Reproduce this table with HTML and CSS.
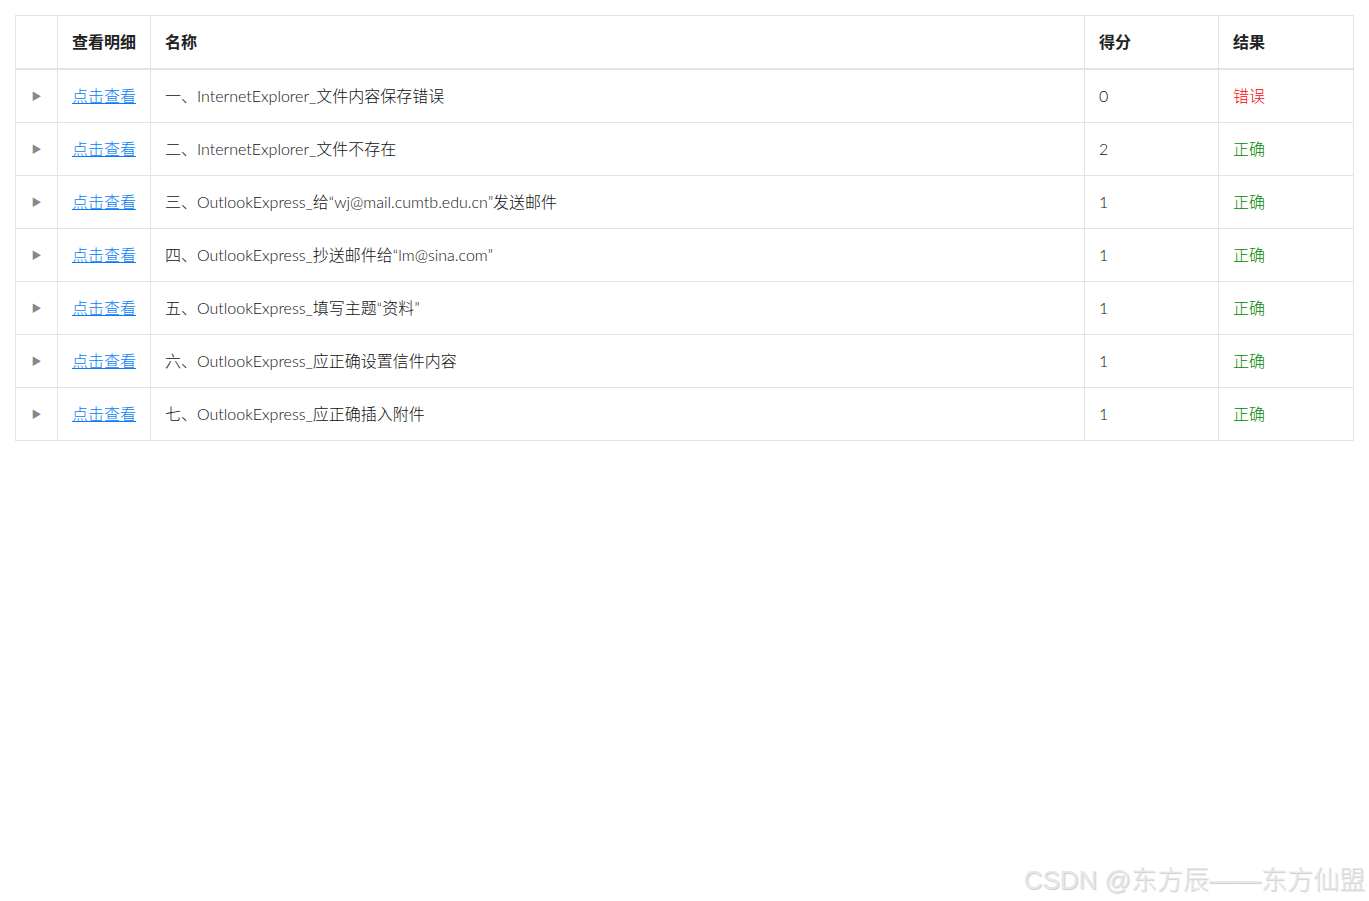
FILE: index.html
```html
<!DOCTYPE html>
<html lang="zh">
<head>
<meta charset="utf-8">
<link rel="stylesheet" href="styles.css">
</head>
<body>
<div class="wrap">
<table class="grid">
  <colgroup>
    <col class="c-exp"><col class="c-link"><col class="c-name"><col class="c-score"><col class="c-res">
  </colgroup>
  <thead>
    <tr><th></th><th>查看明细</th><th>名称</th><th>得分</th><th>结果</th></tr>
  </thead>
  <tbody>
    <tr><td class="exp">&#9654;</td><td><a href="#">点击查看</a></td><td>一、InternetExplorer_文件内容保存错误</td><td>0</td><td class="bad">错误</td></tr>
    <tr><td class="exp">&#9654;</td><td><a href="#">点击查看</a></td><td>二、InternetExplorer_文件不存在</td><td>2</td><td class="ok">正确</td></tr>
    <tr><td class="exp">&#9654;</td><td><a href="#">点击查看</a></td><td>三、OutlookExpress_给“wj@mail.cumtb.edu.cn”发送邮件</td><td>1</td><td class="ok">正确</td></tr>
    <tr><td class="exp">&#9654;</td><td><a href="#">点击查看</a></td><td>四、OutlookExpress_抄送邮件给“lm@sina.com”</td><td>1</td><td class="ok">正确</td></tr>
    <tr><td class="exp">&#9654;</td><td><a href="#">点击查看</a></td><td>五、OutlookExpress_填写主题“资料”</td><td>1</td><td class="ok">正确</td></tr>
    <tr><td class="exp">&#9654;</td><td><a href="#">点击查看</a></td><td>六、OutlookExpress_应正确设置信件内容</td><td>1</td><td class="ok">正确</td></tr>
    <tr><td class="exp">&#9654;</td><td><a href="#">点击查看</a></td><td>七、OutlookExpress_应正确插入附件</td><td>1</td><td class="ok">正确</td></tr>
  </tbody>
</table>
</div>
<div class="watermark">CSDN @东方辰——东方仙盟</div>
</body>
</html>
```
FILE: styles.css
```css
html, body {
  margin: 0;
  padding: 0;
  background: #fff;
}
body {
  font-family: Lato, "Noto Sans CJK SC", sans-serif;
  font-size: 16px;
  color: #1a1a1a;
  height: 901px;
  position: relative;
  overflow: hidden;
}
.wrap {
  padding: 15px 15px 0 15px;
}
.grid {
  border-collapse: collapse;
  width: 1339px;
  table-layout: fixed;
}
.c-exp { width: 42px; }
.c-link { width: 93px; }
.c-name { width: 934px; }
.c-score { width: 134px; }
.c-res { width: 135px; }
.grid th, .grid td {
  border: 1px solid #e0e3e8;
  padding: 0 14px 2px;
  height: 50px;
  text-align: left;
  white-space: nowrap;
  font-weight: 300;
  color: #111;
}
.grid th {
  font-family: "Noto Sans CJK SC", sans-serif;
  font-weight: bold;
  font-size: 16px;
  color: #222;
  height: 50px;
  border-bottom: 2px solid #e0e3e8;
}
.grid td.exp {
  text-align: center;
  color: #888;
  font-size: 10px;
  padding: 0 0 2px;
}
.grid a {
  color: #0a7cf7;
  text-decoration: underline;
}
.grid td.bad { color: #f00; }
.grid td.ok { color: #080; }
.watermark {
  position: absolute;
  right: 4px;
  top: 859px;
  font-family: "Liberation Sans", "Noto Sans CJK SC", sans-serif;
  font-size: 26px;
  font-weight: 300;
  color: #e6e6e6;
  text-shadow: 1px 1px 1px #cdcdcd;
  white-space: nowrap;
}
```
